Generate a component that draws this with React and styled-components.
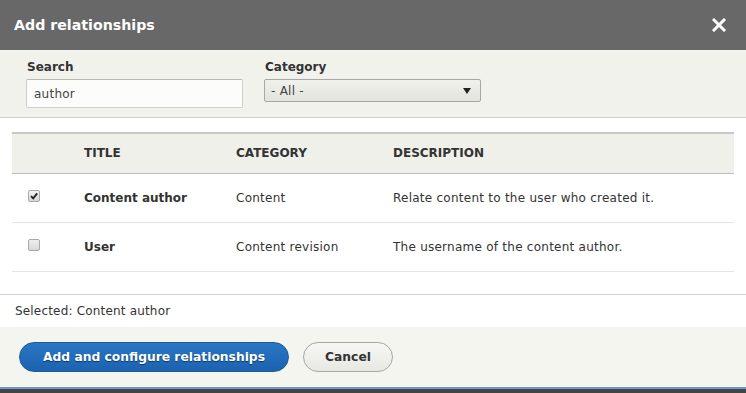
import React from "react";
import styled, { createGlobalStyle } from "styled-components";

const Global = createGlobalStyle`
  html, body { margin: 0; padding: 0; background: #444; }
  body { font-family: "DejaVu Sans", "Open Sans", sans-serif; color: #333; }
  * { box-sizing: border-box; }
`;

const Dialog = styled.div`
  width: 746px;
  height: 389px;
  background: #fff;
  display: flex;
  flex-direction: column;
  border-bottom: 2px solid #6d98cc;
`;

const TitleBar = styled.div`
  height: 50px;
  flex: none;
  background: #686868;
  display: flex;
  align-items: center;
  justify-content: space-between;
  padding: 0 20px 0 14px;
`;

const Title = styled.h1`
  margin: 0;
  font-size: 14.2px;
  font-weight: 700;
  color: #fff;
`;

const Close = styled.button`
  border: 0;
  background: none;
  padding: 0;
  width: 14px;
  height: 14px;
  display: flex;
  cursor: pointer;
`;

const Filters = styled.div`
  flex: none;
  height: 68px;
  background: #f2f2ed;
  border-bottom: 1px solid #cfcfcb;
  display: flex;
  gap: 21px;
  padding: 9px 0 0 26px;
`;

const Field = styled.div`
  display: flex;
  flex-direction: column;
  gap: 3px;
`;

const Label = styled.label`
  font-size: 12px;
  font-weight: 700;
  line-height: 17px;
  color: #333;
  padding-left: 1px;
`;

const Input = styled.input`
  width: 217px;
  height: 29px;
  border: 1px solid #cfcfcb;
  border-top-color: #b8b8b4;
  border-radius: 2px;
  background: #fcfcfa;
  font-family: inherit;
  font-size: 12px;
  letter-spacing: 0.25px;
  color: #444;
  padding: 0 7px;
  outline: none;
`;

const Select = styled.div`
  width: 217px;
  height: 23px;
  border: 1px solid #a8a8a8;
  border-radius: 2px;
  background: linear-gradient(#f0f0ec, #e4e4de);
  display: flex;
  align-items: center;
  justify-content: space-between;
  padding: 0 9px 0 6px;
  font-size: 12px;
  letter-spacing: 0.25px;
  color: #444;
`;

const Arrow = styled.span`
  width: 0;
  height: 0;
  border-left: 4.5px solid transparent;
  border-right: 4.5px solid transparent;
  border-top: 6px solid #222;
  margin-top: 1px;
`;

const TableWrap = styled.div`
  flex: none;
  height: 177px;
  padding: 14px 12px 0 12px;
  border-bottom: 1px solid #cfcfcb;
`;

const Table = styled.table`
  width: 100%;
  border-collapse: collapse;
  font-size: 12px;
  border-top: 2px solid #c8c8c4;
`;

const HeadRow = styled.tr`
  background: #f0f0eb;
  height: 40px;
  border-bottom: 1px solid #bdbdb9;
`;

const Th = styled.th`
  text-align: left;
  font-weight: 700;
  text-transform: uppercase;
  color: #333;
  padding: 0;
  width: ${(p) => (p.$w ? p.$w + "px" : "auto")};
`;

const Row = styled.tr`
  height: 49px;
  border-bottom: 1px solid #e4e4e0;
`;

const Td = styled.td`
  padding: 0 0 0 ${(p) => p.$pad || 0}px;
  font-weight: ${(p) => (p.$bold ? 700 : 400)};
  letter-spacing: ${(p) => (p.$bold ? 0 : 0.25)}px;
  color: #333;
  vertical-align: middle;
`;

const Check = styled.span`
  display: block;
  width: 12px;
  height: 12px;
  margin-top: -4px;
  border: 1px solid #a9a9a9;
  border-radius: 2px;
  background: ${(p) => (p.$on ? "linear-gradient(#f4f4f4,#d6d6d6)" : "linear-gradient(#eee,#d8d8d8)")};
  position: relative;
`;

const Selected = styled.div`
  flex: none;
  height: 32px;
  display: flex;
  align-items: center;
  padding: 0 15px;
  font-size: 12px;
  letter-spacing: 0.18px;
  color: #333;
`;

const Footer = styled.div`
  flex: 1;
  background: #f5f5f0;
  display: flex;
  align-items: flex-start;
  gap: 14px;
  padding: 15px 19px 0;
`;

const Button = styled.button`
  height: 30px;
  width: ${(p) => (p.$primary ? 270 : 90)}px;
  padding: 0;
  border-radius: 15px;
  font-family: inherit;
  font-size: 12.3px;
  font-weight: 700;
  cursor: pointer;
  border: 1px solid ${(p) => (p.$primary ? "#1e5c90" : "#a6a6a6")};
  color: ${(p) => (p.$primary ? "#fff" : "#333")};
  background: ${(p) =>
    p.$primary ? "linear-gradient(#2a76c6, #1b63b0)" : "linear-gradient(#f6f6f3, #e8e8e3)"};
  text-shadow: ${(p) => (p.$primary ? "0 1px 1px rgba(0,0,0,0.5)" : "none")};
`;

const rows = [
  { on: true, title: "Content author", cat: "Content", desc: "Relate content to the user who created it." },
  { on: false, title: "User", cat: "Content revision", desc: "The username of the content author." },
];

export default function App() {
  return (
    <>
      <Global />
      <Dialog>
        <TitleBar>
          <Title>Add relationships</Title>
          <Close aria-label="Close">
            <svg width="14" height="14" viewBox="0 0 14 14">
              <path d="M2 2L12 12M12 2L2 12" stroke="#fff" strokeWidth="3" strokeLinecap="square" />
            </svg>
          </Close>
        </TitleBar>
        <Filters>
          <Field>
            <Label>Search</Label>
            <Input defaultValue="author" />
          </Field>
          <Field>
            <Label>Category</Label>
            <Select>
              <span>- All -</span>
              <Arrow />
            </Select>
          </Field>
        </Filters>
        <TableWrap>
          <Table>
            <thead>
              <HeadRow>
                <Th $w={72} />
                <Th $w={152}>Title</Th>
                <Th $w={157}>Category</Th>
                <Th>Description</Th>
              </HeadRow>
            </thead>
            <tbody>
              {rows.map((r) => (
                <Row key={r.title}>
                  <Td $pad={16}>
                    <Check $on={r.on}>
                      {r.on && (
                        <svg width="10" height="10" viewBox="0 0 10 10" style={{ position: "absolute", left: 0, top: 0 }}>
                          <path d="M2 5.2L4.2 7.4L8.2 2.4" stroke="#222" strokeWidth="1.8" fill="none" />
                        </svg>
                      )}
                    </Check>
                  </Td>
                  <Td $bold>{r.title}</Td>
                  <Td>{r.cat}</Td>
                  <Td>{r.desc}</Td>
                </Row>
              ))}
            </tbody>
          </Table>
        </TableWrap>
        <Selected>Selected: Content author</Selected>
        <Footer>
          <Button $primary>Add and configure relationships</Button>
          <Button>Cancel</Button>
        </Footer>
      </Dialog>
    </>
  );
}
